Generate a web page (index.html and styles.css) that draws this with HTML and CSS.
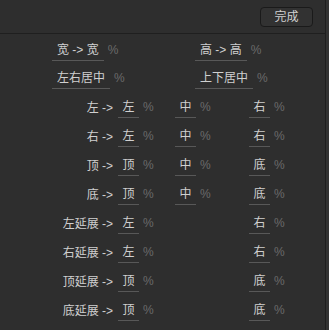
FILE: index.html
```html
<!DOCTYPE html>
<html lang="zh">
<head>
    <meta charset="UTF-8">
    <title>对齐</title>
    <link rel="stylesheet" href="styles.css">
</head>
<body>

<div class="panel">
    <div class="header">
        <button class="done">完成</button>
    </div>

    <div class="pair-row">
        <div class="field"><span class="input">宽 -&gt; 宽</span><span class="pct">%</span></div>
        <div class="field"><span class="input">高 -&gt; 高</span><span class="pct">%</span></div>
    </div>
    <div class="pair-row">
        <div class="field"><span class="input">左右居中</span><span class="pct">%</span></div>
        <div class="field"><span class="input">上下居中</span><span class="pct">%</span></div>
    </div>

    <div class="row">
        <span class="label">左 -&gt;</span>
        <div class="field"><span class="input small">左</span><span class="pct">%</span></div>
        <div class="field"><span class="input small">中</span><span class="pct">%</span></div>
        <div class="field"><span class="input small">右</span><span class="pct">%</span></div>
    </div>
    <div class="row">
        <span class="label">右 -&gt;</span>
        <div class="field"><span class="input small">左</span><span class="pct">%</span></div>
        <div class="field"><span class="input small">中</span><span class="pct">%</span></div>
        <div class="field"><span class="input small">右</span><span class="pct">%</span></div>
    </div>
    <div class="row">
        <span class="label">顶 -&gt;</span>
        <div class="field"><span class="input small">顶</span><span class="pct">%</span></div>
        <div class="field"><span class="input small">中</span><span class="pct">%</span></div>
        <div class="field"><span class="input small">底</span><span class="pct">%</span></div>
    </div>
    <div class="row">
        <span class="label">底 -&gt;</span>
        <div class="field"><span class="input small">顶</span><span class="pct">%</span></div>
        <div class="field"><span class="input small">中</span><span class="pct">%</span></div>
        <div class="field"><span class="input small">底</span><span class="pct">%</span></div>
    </div>

    <div class="row">
        <span class="label">左延展 -&gt;</span>
        <div class="field"><span class="input small">左</span><span class="pct">%</span></div>
        <div></div>
        <div class="field"><span class="input small">右</span><span class="pct">%</span></div>
    </div>
    <div class="row">
        <span class="label">右延展 -&gt;</span>
        <div class="field"><span class="input small">左</span><span class="pct">%</span></div>
        <div></div>
        <div class="field"><span class="input small">右</span><span class="pct">%</span></div>
    </div>
    <div class="row">
        <span class="label">顶延展 -&gt;</span>
        <div class="field"><span class="input small">顶</span><span class="pct">%</span></div>
        <div></div>
        <div class="field"><span class="input small">底</span><span class="pct">%</span></div>
    </div>
    <div class="row">
        <span class="label">底延展 -&gt;</span>
        <div class="field"><span class="input small">顶</span><span class="pct">%</span></div>
        <div></div>
        <div class="field"><span class="input small">底</span><span class="pct">%</span></div>
    </div>
</div>

</body>
</html>
```

FILE: styles.css
```css
body {
    margin: 0;
    background-color: #333333;
    font-family: 'Liberation Sans', 'Noto Sans CJK SC', sans-serif;
    font-size: 12px;
    color: #d0d0d0;
}
.panel {
    width: 326px;
    height: 330px;
    background-color: #2e2e2e;
    border-right: 1px solid #1f1f1f;
    box-sizing: border-box;
}
.header {
    height: 33px;
    display: flex;
    justify-content: flex-end;
    align-items: flex-start;
    border-bottom: 1px solid #1f1f1f;
    margin-bottom: 2px;
}
.done {
    margin-top: 7px;
    margin-right: 12px;
    width: 53px;
    height: 20px;
    padding: 0;
    background-color: #323232;
    border: 1px solid #1a1a1a;
    border-radius: 4px;
    color: #d0d0d0;
    font-family: inherit;
    font-size: 12px;
    line-height: 18px;
}
.pair-row {
    height: 28px;
    display: grid;
    grid-template-columns: 143px auto;
    align-items: center;
    padding-left: 52px;
}
.row {
    height: 29px;
    display: grid;
    grid-template-columns: 118px 57px 74px auto;
    align-items: center;
}
.label {
    text-align: right;
    padding-right: 5px;
}
.field {
    display: flex;
    align-items: center;
}
.input {
    height: 22px;
    line-height: 22px;
    padding: 0 5px;
    border-bottom: 1px solid #585858;
    box-sizing: border-box;
    white-space: nowrap;
}
.input.small {
    width: 21px;
    padding: 0;
    text-align: center;
}
.pct {
    margin-left: 4px;
    color: #6a6a6a;
}
```
